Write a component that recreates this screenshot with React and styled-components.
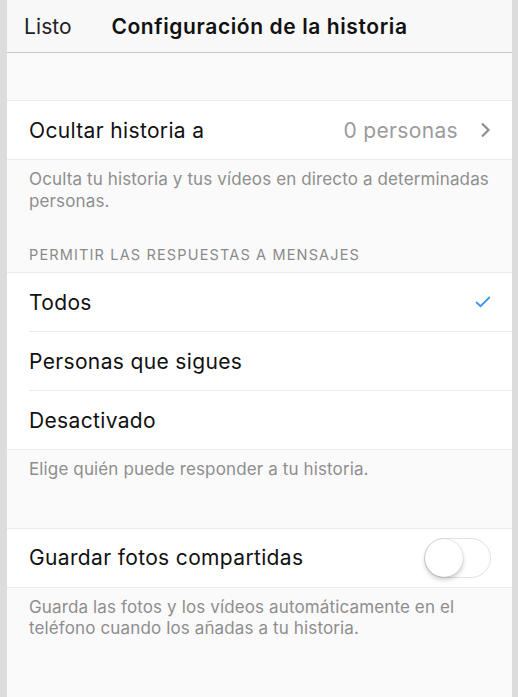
import React, { useState } from "react";
import styled, { createGlobalStyle } from "styled-components";

const GlobalStyle = createGlobalStyle`
  html, body {
    margin: 0;
    padding: 0;
    background: #dcdcdc;
  }
  body {
    font-family: Inter, "Noto Sans", "Liberation Sans", sans-serif;
    -webkit-font-smoothing: antialiased;
  }
`;

const Frame = styled.div`
  padding: 0 6px 0 7px;
  min-height: 697px;
  box-sizing: border-box;
  display: flex;
`;

const Screen = styled.div`
  flex: 1;
  background: #fafafa;
  min-height: 697px;
  display: flex;
  flex-direction: column;
`;

const NavBar = styled.div`
  height: 53px;
  display: grid;
  grid-template-columns: 1fr auto 1fr;
  align-items: center;
  background: #f8f8f8;
  border-bottom: 1px solid #c9c9c9;
  box-sizing: border-box;
`;

const NavButton = styled.span`
  padding-left: 17px;
  font-size: 21px;
  color: #222;
  letter-spacing: 0.1px;
`;

const NavTitle = styled.span`
  font-size: 21px;
  font-weight: 600;
  color: #111;
  letter-spacing: 0.6px;
`;

const Spacer = styled.div`
  height: ${(p) => p.h}px;
`;

const Group = styled.div`
  background: #fff;
  border-top: 1px solid #ebebeb;
  border-bottom: 1px solid #ebebeb;
`;

const Row = styled.div`
  height: 58px;
  display: flex;
  align-items: center;
  padding: 0 21px 0 22px;
  position: relative;
  & + & {
    border-top: 1px solid #ebebeb;
    margin-left: 22px;
    padding-left: 0;
  }
`;

const Label = styled.span`
  flex: 1;
  font-size: 21px;
  color: #111;
  letter-spacing: 0.35px;
`;

const Value = styled.span`
  font-size: 21px;
  color: #9b9b9b;
  letter-spacing: 0.35px;
  margin-right: 22px;
`;

const Footer = styled.p`
  margin: 0;
  padding: 9px 22px 0;
  font-size: 17px;
  line-height: 21.5px;
  color: #8e8e8e;
  letter-spacing: 0.13px;
`;

const SectionTitle = styled.div`
  padding: 0 22px 9px;
  font-size: 14.5px;
  color: #8a8a8a;
  letter-spacing: 1.15px;
  text-transform: uppercase;
`;

const Track = styled.button`
  width: 67px;
  height: 40px;
  border-radius: 20px;
  border: 1px solid #e2e2e2;
  background: ${(p) => (p.$on ? "#4cd964" : "#fff")};
  padding: 0;
  position: relative;
  cursor: pointer;
  box-sizing: border-box;
`;

const Knob = styled.span`
  position: absolute;
  top: 0;
  left: ${(p) => (p.$on ? "27px" : "0")};
  width: 38px;
  height: 38px;
  border-radius: 50%;
  background: #fff;
  box-shadow: 0 3px 5px rgba(0, 0, 0, 0.2), 0 0 1px rgba(0, 0, 0, 0.3);
`;

const Chevron = () => (
  <svg width="11" height="16" viewBox="0 0 11 16">
    <path d="M2 1.5 L8.5 8 L2 14.5" fill="none" stroke="#8f8f8f" strokeWidth="2.2" />
  </svg>
);

const Check = () => (
  <svg width="16" height="12" viewBox="0 0 16 12">
    <path d="M1.2 6 L5.5 10.2 L14.8 1" fill="none" stroke="#3897f0" strokeWidth="1.8" />
  </svg>
);

const options = ["Todos", "Personas que sigues", "Desactivado"];

export default function App() {
  const [selected, setSelected] = useState("Todos");
  const [save, setSave] = useState(false);

  return (
    <>
      <GlobalStyle />
      <Frame>
        <Screen>
          <NavBar>
            <NavButton>Listo</NavButton>
            <NavTitle>Configuración de la historia</NavTitle>
            <span />
          </NavBar>
          <Spacer h={47} />
          <Group>
            <Row>
              <Label>Ocultar historia a</Label>
              <Value>0 personas</Value>
              <Chevron />
            </Row>
          </Group>
          <Footer>
            Oculta tu historia y tus vídeos en directo a determinadas personas.
          </Footer>
          <Spacer h={34} />
          <SectionTitle>Permitir las respuestas a mensajes</SectionTitle>
          <Group>
            {options.map((option) => (
              <Row key={option} onClick={() => setSelected(option)}>
                <Label>{option}</Label>
                {selected === option && <Check />}
              </Row>
            ))}
          </Group>
          <Footer>Elige quién puede responder a tu historia.</Footer>
          <Spacer h={47} />
          <Group>
            <Row>
              <Label>Guardar fotos compartidas</Label>
              <Track $on={save} onClick={() => setSave(!save)}>
                <Knob $on={save} />
              </Track>
            </Row>
          </Group>
          <Footer>
            Guarda las fotos y los vídeos automáticamente en el teléfono cuando los añadas a tu historia.
          </Footer>
        </Screen>
      </Frame>
    </>
  );
}
